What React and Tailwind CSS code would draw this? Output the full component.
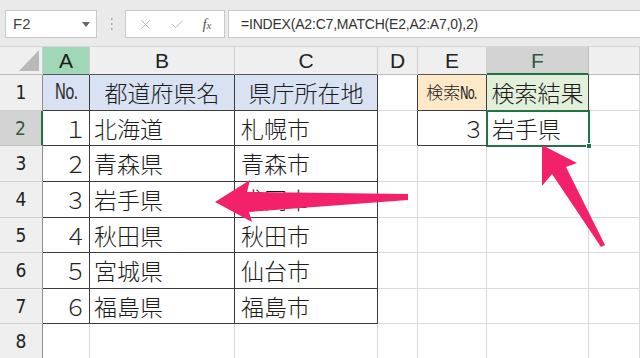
import React from 'react';
import { X, Check } from 'lucide-react';

// column widths / row heights read off the sheet
const COLS = [43, 47, 145, 143, 40, 69, 102, 51];
const LETTERS = ['', 'A', 'B', 'C', 'D', 'E', 'F', ''];

const JP = "font-['Noto_Sans_CJK_JP',sans-serif] font-light";
const NARROW = "font-['Liberation_Sans_Narrow','DejaVu_Sans_Condensed','Liberation_Sans',sans-serif]";

const rows = [
  { h: 'h-[36px]', a: 'No.', b: '都道府県名', c: '県庁所在地', e: '検索No.', f: '検索結果' },
  { h: 'h-[35px]', a: '１', b: '北海道', c: '札幌市', e: '３', f: '岩手県' },
  { h: 'h-[36px]', a: '２', b: '青森県', c: '青森市' },
  { h: 'h-[36px]', a: '３', b: '岩手県', c: '盛岡市' },
  { h: 'h-[35px]', a: '４', b: '秋田県', c: '秋田市' },
  { h: 'h-[36px]', a: '５', b: '宮城県', c: '仙台市' },
  { h: 'h-[35px]', a: '６', b: '福島県', c: '福島市' },
  { h: 'h-[36px]' },
];

const GRID_R = 'border-r border-r-[#dadada]';
const GRID_B = 'border-b border-b-[#dadada]';
const INK_R = 'border-r border-r-[#3c3c3c]';
const INK_B = 'border-b border-b-[#3c3c3c]';

const Toolbar = () => (
  <div className="h-[47px] bg-[#eaeaea] flex items-start pt-[10px] border-b border-b-[#d6d6d6]">
    <div className="ml-[5px] w-[92px] h-[28px] bg-white border border-[#c9c9c9] flex items-center justify-between pl-[7px] pr-[6px]">
      <span className="text-[15px] text-[#444] font-['Liberation_Sans',sans-serif]">F2</span>
      <svg width="8" height="5" viewBox="0 0 8 5"><polygon points="0,0 8,0 4,5" fill="#666" /></svg>
    </div>
    <div className="w-[28px] h-[28px] flex items-center justify-center">
      <svg width="3" height="12" viewBox="0 0 3 12">
        <rect x="1" y="0" width="1.5" height="2" fill="#a8a8a8" />
        <rect x="1" y="5" width="1.5" height="2" fill="#a8a8a8" />
        <rect x="1" y="10" width="1.5" height="2" fill="#a8a8a8" />
      </svg>
    </div>
    <div className="w-[100px] h-[28px] bg-white border border-[#c9c9c9] flex items-center justify-around px-[4px]">
      <X size={15} strokeWidth={1.4} color="#b4b4b4" />
      <Check size={15} strokeWidth={1.4} color="#b4b4b4" />
      <span className="italic text-[15px] text-[#555] font-['Liberation_Serif',serif] leading-none">
        f<span className="text-[11px]">x</span>
      </span>
    </div>
    <div className="ml-[3px] flex-1 h-[28px] bg-white border border-[#c9c9c9] border-r-0 flex items-center pl-[12px]">
      <span className="text-[14px] tracking-[-0.2px] text-[#333] font-['Liberation_Sans',sans-serif]">
        =INDEX(A2:C7,MATCH(E2,A2:A7,0),2)
      </span>
    </div>
  </div>
);

const HeaderRow = () => (
  <div className="flex h-[28px]">
    {COLS.map((w, i) => {
      let cls = 'bg-[#efefef] border-r border-r-[#cfcfcf] border-b border-b-[#bdbdbd] text-[#222]';
      if (i === 1) cls = 'bg-[#a0d7b6] border-r border-r-[#cfcfcf] border-b border-b-[#555] text-[#1c1c1c]';
      if (i === 2 || i === 3) cls = 'bg-[#efefef] border-r border-r-[#cfcfcf] border-b border-b-[#555] text-[#222]';
      if (i === 5) cls = 'bg-[#efefef] border-r border-r-[#cfcfcf] border-b border-b-[#555] text-[#222]';
      if (i === 6) cls = 'bg-[#d3d3d3] border-r border-r-[#bdbdbd] border-b-2 border-b-[#217346] text-[#2f5a40]';
      return (
        <div key={i} style={{ width: w }} className={`shrink-0 flex items-center justify-center relative ${cls}`}>
          {i === 0 ? (
            <svg className="absolute right-[3px] bottom-[3px]" width="20" height="21" viewBox="0 0 20 21">
              <polygon points="20,0 20,21 0,21" fill="#b9b9b9" />
            </svg>
          ) : (
            <span className="text-[21px] leading-none font-['Liberation_Sans',sans-serif]">{LETTERS[i]}</span>
          )}
        </div>
      );
    })}
  </div>
);

const Cell = ({ w, cls, children }) => (
  <div style={{ width: w }} className={`shrink-0 flex items-center overflow-hidden whitespace-nowrap ${cls}`}>
    {children}
  </div>
);

const SheetRow = ({ r, idx }) => {
  const n = idx + 1;
  const inTable = n <= 7;
  const active = n === 2;
  const headCls = active
    ? 'bg-[#d3d3d3] border-r-2 border-r-[#217346] border-b border-b-[#c4c4c4] text-[#2f5a40] justify-center'
    : 'bg-[#efefef] border-r border-r-[#8f8f8f] border-b border-b-[#cfcfcf] text-[#222] justify-center';
  const tb = inTable ? INK_B : GRID_B;
  const tr = inTable ? INK_R : GRID_R;
  const fill = n === 1 ? 'bg-[#d9e2f3]' : 'bg-white';
  const num = n === 1
    ? 'justify-center text-[21px] text-[#333] ' + NARROW
    : 'justify-end pr-[2px] text-[23px] text-[#222] ' + JP;
  const side = n <= 2;

  return (
    <div className={`flex ${r.h}`}>
      <Cell w={COLS[0]} cls={headCls}>
        <span className={`text-[19px] leading-none ${NARROW}`}>{n}</span>
      </Cell>
      <Cell w={COLS[1]} cls={`${fill} ${tr} ${tb} ${num}`}>
        {r.a && <span className={n === 1 ? 'inline-block scale-x-[0.8] tracking-[-1px]' : ''}>{r.a}</span>}
      </Cell>
      <Cell w={COLS[2]} cls={`${fill} ${tr} ${tb} text-[23px] text-[#1c1c1c] ${JP} ${n === 1 ? 'justify-center' : 'pl-[4px]'}`}>
        {r.b}
      </Cell>
      <Cell w={COLS[3]} cls={`${fill} ${tr} ${tb} text-[23px] text-[#1c1c1c] ${JP} ${n === 1 ? 'justify-center' : 'pl-[6px]'}`}>
        {r.c}
      </Cell>
      <Cell w={COLS[4]} cls={`bg-white ${side ? INK_R : GRID_R} ${GRID_B}`} />
      <Cell
        w={COLS[5]}
        cls={`${n === 1 ? 'bg-[#fde8c8] justify-center text-[17px]' : n === 2 ? 'bg-white justify-end pr-[1px] text-[23px]' : 'bg-white'} ${side ? INK_R : GRID_R} ${side ? INK_B : GRID_B} text-[#1c1c1c] ${JP}`}
      >
        {n === 1 ? (
          <span>検索<span className={`inline-block scale-x-[0.75] origin-left -mr-[5px] tracking-[-1px] ${NARROW}`}>No.</span></span>
        ) : r.e}
      </Cell>
      <Cell
        w={COLS[6]}
        cls={`${n === 1 ? 'bg-[#e2efda] justify-center' : 'bg-white pl-[5px]'} ${side ? INK_R : GRID_R} ${side ? INK_B : GRID_B} text-[23px] text-[#1c1c1c] ${JP}`}
      >
        {r.f}
      </Cell>
      <Cell w={COLS[7]} cls={`bg-white ${GRID_R} ${GRID_B}`} />
    </div>
  );
};

const Arrows = () => (
  <svg className="absolute inset-0 pointer-events-none" width="640" height="358" viewBox="0 0 640 358">
    <polygon
      points="215,202 250,180 247,192 408,194 408,200 249,212 252,222"
      fill="#f3206a"
    />
    <polygon
      points="542,145 577,163 566,167 605,245 601,247 552,174 542,186"
      fill="#f3206a"
    />
  </svg>
);

export default function App() {
  return (
    <div className="w-[640px] h-[358px] overflow-hidden bg-white relative font-['Liberation_Sans',sans-serif]">
      <Toolbar />
      <div className="relative">
        <HeaderRow />
        {rows.map((r, i) => (
          <SheetRow key={i} r={r} idx={i} />
        ))}
        {/* active cell F2 */}
        <div className="absolute left-[486px] top-[63px] w-[104px] h-[37px] border-2 border-[#217346] pointer-events-none">
          <div className="absolute -right-[4px] -bottom-[4px] w-[6px] h-[6px] bg-[#217346] border border-white" />
        </div>
      </div>
      <Arrows />
    </div>
  );
}
